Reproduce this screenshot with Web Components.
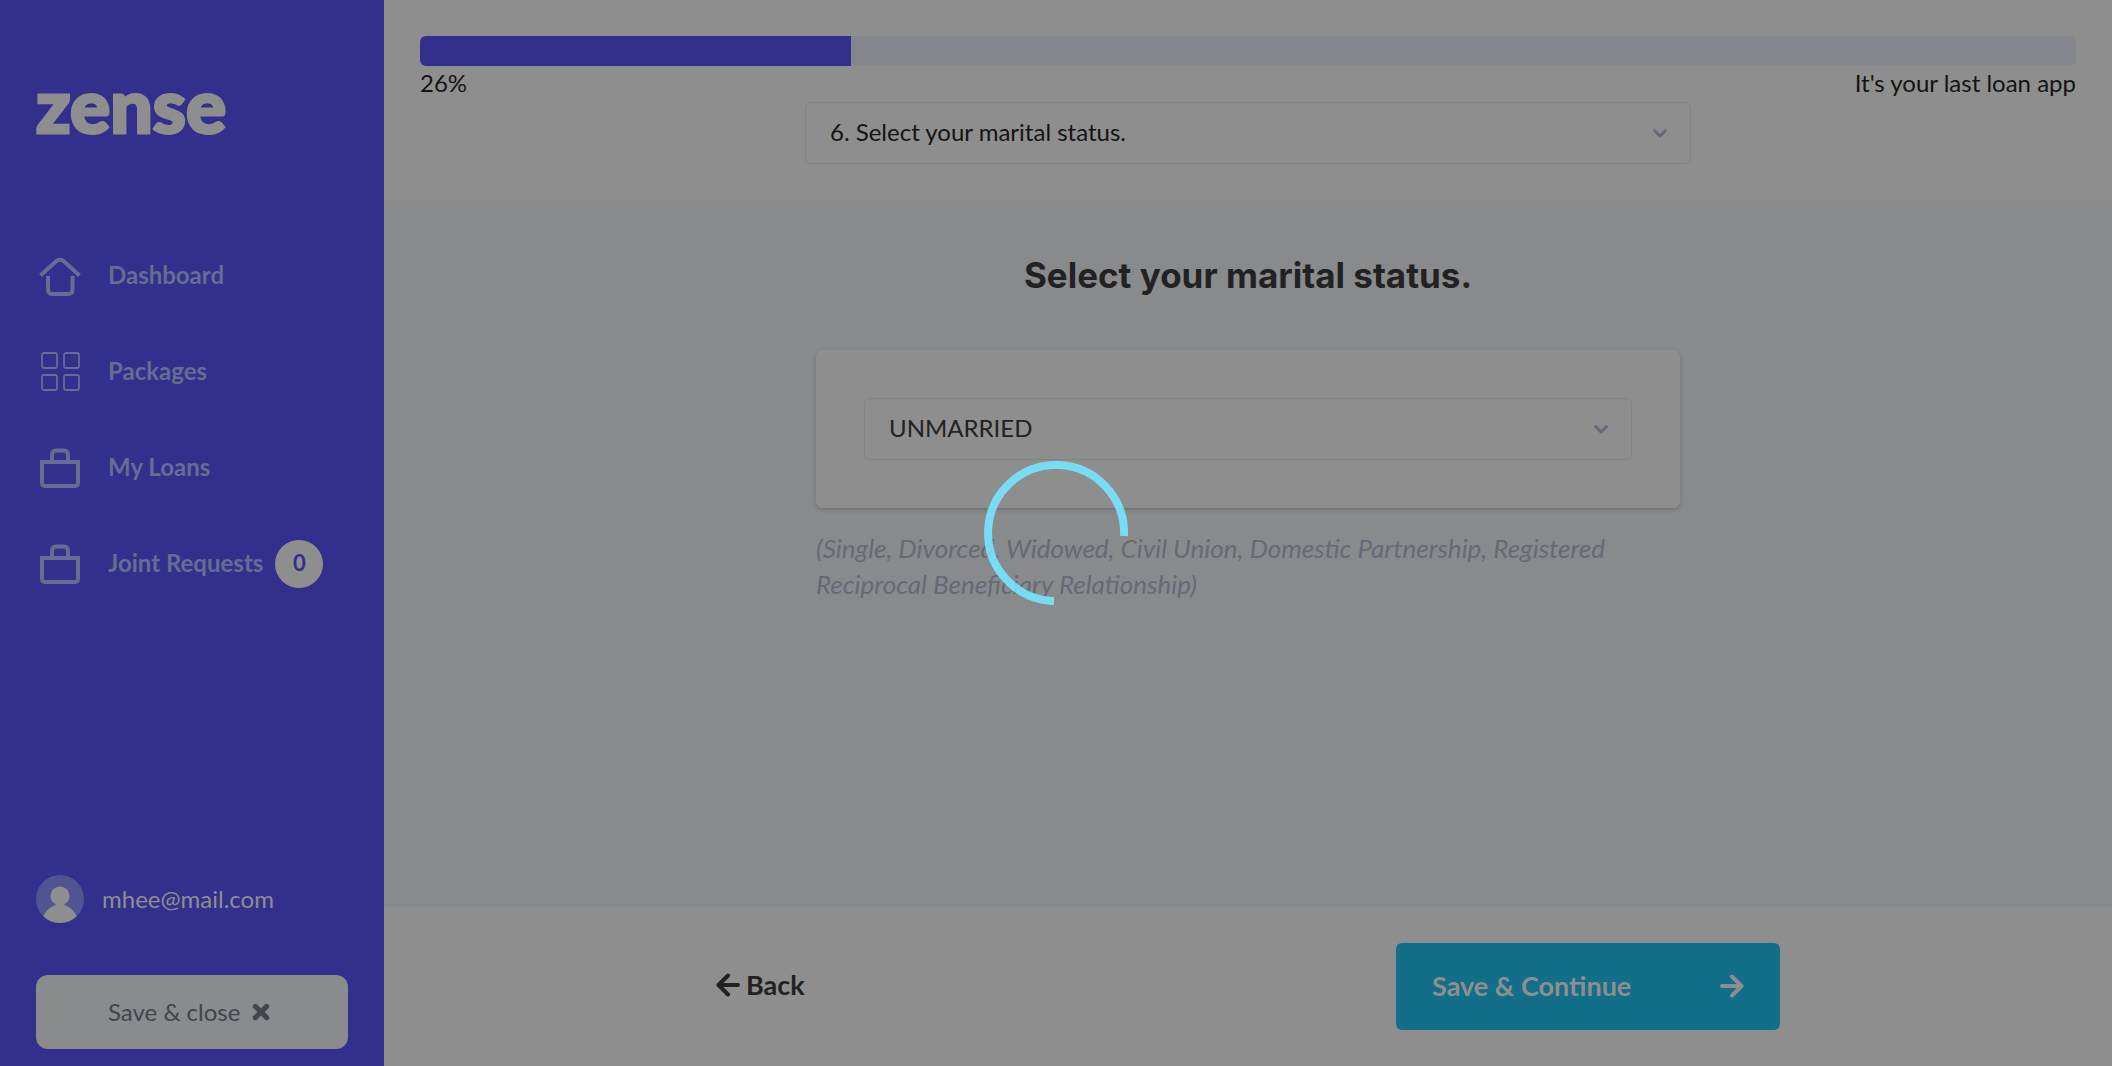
<!DOCTYPE html>
<html lang="en">
<head>
<meta charset="utf-8">
<meta name="viewport" content="width=device-width, initial-scale=1">
<title>Zense – Select your marital status</title>
<style>
  :root {
    --indigo: #33308d;
    --surface: #8e8e8e;
    --ground: #898a8c;
    --line: #828389;
    --muted: #666c92;
    --ink: #222222;
  }
  html, body { height: 100%; }
  body { margin: 0; background: var(--ground); color: #141414; font-family: Lato, sans-serif; font-size: 24px; line-height: 36px; }
</style>
</head>
<body>
<zense-app></zense-app>

<script>
const define = (name, html, setup) => {
  const template = document.createElement('template');
  template.innerHTML = '<style>*,*::before,*::after{box-sizing:border-box}</style>' + html;
  customElements.define(name, class extends HTMLElement {
    constructor() {
      super();
      this.attachShadow({ mode: 'open' }).append(template.content.cloneNode(true));
    }
    connectedCallback() { if (setup) setup(this, this.shadowRoot); }
  });
};

const icons = {
  home: ['0 0 48 48', '<g fill="none" stroke="currentColor" stroke-width="4"><path d="M4.500 23.500 19.800 9.600Q24 6 28.200 9.600L43.500 23.500"/><path d="M12 24V37.500Q12 42 16.500 42H32Q36.500 42 36.500 37.500V24"/></g>'],
  grid: ['0 0 48 48', '<g fill="none" stroke="currentColor" stroke-width="1.800"><rect x="6" y="5" width="15" height="15" rx="2"/><rect x="28" y="5" width="15" height="15" rx="2"/><rect x="6" y="27" width="15" height="15" rx="2"/><rect x="28" y="27" width="15" height="15" rx="2"/></g>'],
  bag: ['0 0 48 48', '<g fill="none" stroke="currentColor" stroke-width="4"><path d="M6 18H42V38.500Q42 42 38.500 42H9.500Q6 42 6 38.500Z"/><path d="M16 18V11Q16 6.500 20 6.500H28Q32 6.500 32 11V18"/></g>'],
  avatar: ['0 0 48 48', '<defs><clipPath id="c"><circle cx="24" cy="24" r="24"/></clipPath></defs><g clip-path="url(#c)"><path fill="#505491" d="M0 0H48V48H0Z"/><g fill="#8e8e8e"><circle cx="24" cy="21" r="9.500"/><path d="M6 44C10 34 17 29.500 24 29.500S38 34 42 44V48H6Z"/></g></g>'],
  cross: ['0 0 16 16', '<path d="M3 3 13 13M13 3 3 13" fill="none" stroke="currentColor" stroke-width="4.400" stroke-linecap="round"/>'],
  chevron: ['0 0 16 16', '<path d="M2.500 5.500 8 11 13.500 5.500" fill="none" stroke="currentColor" stroke-width="3" stroke-linecap="round" stroke-linejoin="round"/>'],
  left: ['0 0 24 24', '<path d="M12 2.500 2.500 12 12 21.500M3 12H22" fill="none" stroke="currentColor" stroke-width="4" stroke-linecap="round" stroke-linejoin="round"/>'],
  right: ['0 0 24 24', '<path d="M12 2.500 21.500 12 12 21.500M21 12H2" fill="none" stroke="currentColor" stroke-width="4" stroke-linecap="round" stroke-linejoin="round"/>']
};

define('z-icon', `
  <style>:host{display:block;flex:none;width:24px;height:24px} svg{display:block;width:100%;height:100%}</style>
  <svg aria-hidden="true"></svg>`,
  (host, root) => {
    const [box, body] = icons[host.getAttribute('name')];
    const svg = root.querySelector('svg');
    svg.setAttribute('viewBox', box);
    svg.innerHTML = body;
  });

define('z-nav-link', `
  <style>
    :host{display:block}
    a{display:flex;align-items:center;gap:12px;height:48px;color:var(--muted);font-weight:700;text-decoration:none}
    .label{padding-bottom:2px}
    ::slotted([slot=icon]){width:48px;height:48px;margin-right:12px}
    ::slotted([slot=badge]){display:flex;align-items:center;justify-content:center;width:48px;height:48px;padding-bottom:2px;border-radius:50%;background:var(--surface);color:var(--indigo);font-size:22px}
  </style>
  <a href="#"><slot name="icon"></slot><span class="label"><slot></slot></span><slot name="badge"></slot></a>`);

define('z-sidebar', `
  <style>
    :host{display:flex;flex-direction:column;flex:none;box-sizing:border-box;width:384px;padding:68px 36px 17px;background:var(--indigo)}
    .logo{color:var(--surface);font-size:75px;font-weight:900;line-height:72px;text-decoration:none;-webkit-text-stroke:3px var(--surface)}
    nav{display:flex;flex-direction:column;gap:48px;margin-top:112px}
    .user{display:flex;align-items:center;gap:18px;margin-top:auto;color:var(--surface)}
    .user z-icon{width:48px;height:48px}
    button{display:flex;align-items:center;gap:12px;height:74px;margin-top:52px;padding:0 72px;border:0;border-radius:12px;background:#8a8b8c;color:#42454c;font:inherit}
    button z-icon{width:18px;height:18px}
  </style>
  <a class="logo" href="#">zense</a>
  <nav aria-label="Main">
    <z-nav-link><z-icon slot="icon" name="home"></z-icon>Dashboard</z-nav-link>
    <z-nav-link><z-icon slot="icon" name="grid"></z-icon>Packages</z-nav-link>
    <z-nav-link><z-icon slot="icon" name="bag"></z-icon>My Loans</z-nav-link>
    <z-nav-link><z-icon slot="icon" name="bag"></z-icon>Joint Requests<span slot="badge">0</span></z-nav-link>
  </nav>
  <div class="user"><z-icon name="avatar"></z-icon><span>mhee@mail.com</span></div>
  <button type="button">Save &amp; close<z-icon name="cross"></z-icon></button>`);

define('z-progress', `
  <style>
    :host{display:block}
    .track{height:30px;border-radius:6px;background:#86878d;overflow:hidden}
    .fill{height:100%;background:var(--indigo)}
    .legend{display:flex;justify-content:space-between;padding-bottom:2px;line-height:34px}
  </style>
  <div class="track" role="progressbar" aria-label="Application progress" aria-valuemin="0" aria-valuemax="100"><div class="fill"></div></div>
  <div class="legend"><span class="value"></span><span><slot></slot></span></div>`,
  (host, root) => {
    const value = host.getAttribute('value');
    root.querySelector('.track').setAttribute('aria-valuenow', value);
    root.querySelector('.fill').style.width = value + '%';
    root.querySelector('.value').textContent = value + '%';
  });

define('z-select', `
  <style>
    :host{display:block}
    label{display:grid;align-items:center}
    select,z-icon{grid-area:1/1}
    select{appearance:none;width:100%;height:62px;margin:0;padding:0 60px 2px 24px;border:1px solid var(--line);border-radius:6px;background:transparent;color:inherit;font:inherit}
    z-icon{justify-self:end;width:16px;height:16px;margin-right:23px;color:#646a78;pointer-events:none}
  </style>
  <label><select></select><z-icon name="chevron"></z-icon></label>`,
  (host, root) => {
    const select = root.querySelector('select');
    select.setAttribute('aria-label', host.getAttribute('label'));
    select.replaceChildren(new Option(host.getAttribute('value')));
  });

define('z-card', `
  <style>:host{display:block;padding:48px;border-radius:6px;background:var(--surface);box-shadow:0 1px 5px rgba(60,60,70,.2),0 2px 2px rgba(60,60,60,.14)}</style>
  <slot></slot>`);

define('z-question', `
  <style>
    :host{display:flex;flex-direction:column;align-items:center;flex:1;padding:48px 36px;background:var(--ground);color:var(--ink)}
    h1{margin:0 0 48px;font-family:Inter,sans-serif;font-size:35px;font-weight:700;line-height:54px}
    .answer{width:100%;max-width:864px}
    p{margin:22px 0 0;color:#686974;font-size:26px;font-style:italic}
  </style>
  <h1><slot name="title"></slot></h1>
  <div class="answer"><z-card><slot></slot></z-card><p><slot name="hint"></slot></p></div>`);

define('z-actions', `
  <style>
    :host{display:block;padding:36px;background:var(--surface)}
    .row{display:flex;align-items:center;justify-content:space-between;max-width:1064px;margin:0 auto}
    button{display:flex;align-items:center;border:0;border-radius:6px;background:none;font:inherit;font-size:27px;font-weight:700}
    .back{gap:6px;padding:0 0 4px;color:var(--ink)}
    .next{justify-content:space-between;width:384px;height:87px;padding:0 36px 2px;background:#126e89;color:var(--surface)}
  </style>
  <div class="row">
    <button class="back" type="button"><z-icon name="left"></z-icon>Back</button>
    <button class="next" type="submit">Save &amp; Continue<z-icon name="right"></z-icon></button>
  </div>`);

define('z-loader', `
  <style>
    :host{position:fixed;inset:0;display:flex;align-items:center;justify-content:center}
    svg{width:144px;height:144px}
  </style>
  <svg viewBox="0 0 144 144" role="img" aria-label="Loading"><path d="M140 75A68 68 0 1 0 70 140" fill="none" stroke="#76e4ff" stroke-opacity=".9" stroke-width="8"/></svg>`);

define('zense-app', `
  <style>
    :host{display:flex;min-height:100vh}
    main{display:flex;flex-direction:column;flex:1;min-width:0}
    header{padding:36px;background:var(--surface)}
    header z-select{max-width:886px;margin:0 auto}
  </style>
  <z-sidebar></z-sidebar>
  <main>
    <header>
      <z-progress value="26">It's your last loan app</z-progress>
      <z-select label="Question" value="6. Select your marital status."></z-select>
    </header>
    <z-question>
      <span slot="title">Select your marital status.</span>
      <z-select label="Marital status" value="UNMARRIED"></z-select>
      <span slot="hint">(Single, Divorced, Widowed, Civil Union, Domestic Partnership, Registered Reciprocal Beneficiary Relationship)</span>
    </z-question>
    <z-actions></z-actions>
  </main>
  <z-loader></z-loader>`);
</script>
</body>
</html>
